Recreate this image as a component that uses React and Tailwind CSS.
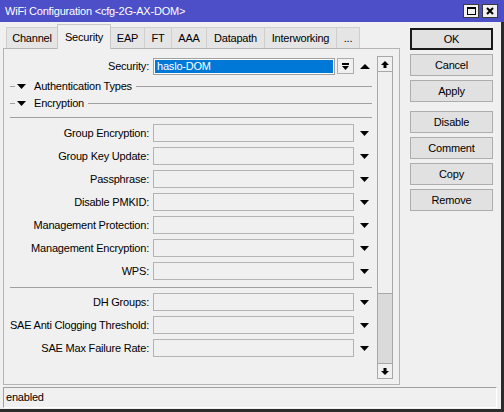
// WiFi Configuration window

const font = "font-['Liberation_Sans',Arial,sans-serif]";

function DownTri() {
  return (
    <svg width="9" height="5" viewBox="0 0 9 5">
      <polygon points="0,0 9,0 4.5,5" fill="#000" />
    </svg>
  );
}

function UpTri() {
  return (
    <svg width="10" height="5" viewBox="0 0 10 5">
      <polygon points="0,5 10,5 5,0" fill="#000" />
    </svg>
  );
}

function ScrollArrow({ up }) {
  return (
    <svg width="8" height="7" viewBox="0 0 8 7" className={up ? "" : "rotate-180"}>
      <polygon points="4,0 8,4 0,4" fill="#000" />
      <rect x="2.5" y="4" width="3" height="3" fill="#000" />
    </svg>
  );
}

function Row({ label }) {
  return (
    <div className="flex items-center h-[18px] shrink-0">
      <div className="w-[145px] shrink-0 text-right whitespace-nowrap">{label}:</div>
      <div className="ml-[4px] w-[201px] h-[18px] border border-[#b4b4b4] bg-[#f0f0f0]" />
      <div className="ml-[6px] flex items-center">
        <DownTri />
      </div>
    </div>
  );
}

function Header({ title, className }) {
  return (
    <div className={"flex items-center h-[17px] shrink-0 " + (className || "")}>
      <div className="ml-[6px] w-[5px] h-px bg-[#a0a0a0]" />
      <div className="ml-[2px] flex items-center">
        <DownTri />
      </div>
      <div className="ml-[8px] whitespace-nowrap">{title}</div>
      <div className="ml-[4px] mr-[5px] flex-1 h-px bg-[#a0a0a0]" />
    </div>
  );
}

function Tab({ label, width, active }) {
  if (active) {
    return (
      <div
        className={
          "h-[25px] -mb-px relative z-10 bg-[#f0f0f0] border-t border-l border-r border-[#c8c8c8] flex items-start justify-center pt-[4px] " +
          width
        }
      >
        {label}
      </div>
    );
  }
  return (
    <div
      className={
        "h-[21px] bg-[#e5e5e5] border-t border-r border-[#cfcfcf] flex items-center justify-center " +
        width
      }
    >
      {label}
    </div>
  );
}

function SideButton({ label, primary, className }) {
  return (
    <div
      className={
        "h-[22px] flex items-center justify-center bg-[#e1e1e1] " +
        (primary ? "border-2 border-[#1a1a1a] " : "border border-[#adadad] ") +
        (className || "")
      }
    >
      {label}
    </div>
  );
}

export default function App() {
  return (
    <div
      className={
        "w-[504px] h-[412px] bg-[#f0f0f0] flex flex-col overflow-hidden text-[11px] tracking-[-0.2px] text-black " +
        font
      }
    >
      {/* title bar */}
      <div className="h-[22px] shrink-0 bg-[#4c4fc7] flex items-center pl-[5px] pr-[6px] text-white">
        <span className="flex-1 whitespace-nowrap">WiFi Configuration &lt;cfg-2G-AX-DOM&gt;</span>
        <div className="flex gap-[3px]">
          <div className="w-[16px] h-[14px] bg-[#f0f0f0] border border-[#3a3a3a] flex items-center justify-center">
            <div className="w-[9px] h-[8px] border border-black border-t-2" />
          </div>
          <div className="w-[16px] h-[14px] bg-[#f0f0f0] border border-[#3a3a3a] flex items-center justify-center">
            <svg width="8" height="8" viewBox="0 0 8 8">
              <path d="M1 1 L7 7 M7 1 L1 7" stroke="#000" strokeWidth="2" />
            </svg>
          </div>
        </div>
      </div>

      {/* body */}
      <div className="flex-1 flex flex-col border-r-[3px] border-b-[3px] border-[#2b2b2b]">
        <div className="h-[363px] flex shrink-0">
          {/* left column: tabs + panel */}
          <div className="ml-[3px] w-[397px] flex flex-col">
            <div className="h-[26px] flex items-end pl-[3px] shrink-0">
              <div className="h-[21px] w-[51px] bg-[#e5e5e5] border-t border-l border-[#cfcfcf] flex items-center justify-center">
                Channel
              </div>
              <Tab label="Security" width="w-[54px]" active />
              <Tab label="EAP" width="w-[34px]" />
              <Tab label="FT" width="w-[27px]" />
              <Tab label="AAA" width="w-[35px]" />
              <Tab label="Datapath" width="w-[58px]" />
              <Tab label="Interworking" width="w-[72px]" />
              <Tab label="..." width="w-[23px]" />
            </div>

            <div className="flex-1 border border-[#b4b4b4] flex">
              {/* form */}
              <div className="flex-1 flex flex-col pt-[8px]">
                <div className="flex items-center h-[18px] shrink-0">
                  <div className="w-[145px] shrink-0 text-right">Security:</div>
                  <div className="ml-[4px] w-[182px] h-[17px] border border-[#a0a0a0] bg-white p-px">
                    <div className="h-full bg-[#0078d7] text-white pl-[2px] flex items-center leading-none">
                      haslo-DOM
                    </div>
                  </div>
                  <div className="ml-[2px] w-[17px] h-[16px] border border-[#adadad] bg-[#f0f0f0] flex flex-col items-center justify-center gap-px">
                    <div className="w-[7px] h-[2px] bg-black" />
                    <svg width="7" height="4" viewBox="0 0 7 4">
                      <polygon points="0,0 7,0 3.5,4" fill="#000" />
                    </svg>
                  </div>
                  <div className="ml-[6px] flex items-center">
                    <UpTri />
                  </div>
                </div>

                <Header title="Authentication Types" className="mt-[3px]" />
                <Header title="Encryption" />

                <div className="mt-[5px] ml-[6px] mr-[5px] h-px bg-[#a0a0a0] shrink-0" />

                <div className="mt-[6px] flex flex-col gap-[5px]">
                  <Row label="Group Encryption" />
                  <Row label="Group Key Update" />
                  <Row label="Passphrase" />
                  <Row label="Disable PMKID" />
                  <Row label="Management Protection" />
                  <Row label="Management Encryption" />
                  <Row label="WPS" />
                </div>

                <div className="mt-[7px] ml-[6px] mr-[5px] h-px bg-[#a0a0a0] shrink-0" />

                <div className="mt-[5px] flex flex-col gap-[5px]">
                  <Row label="DH Groups" />
                  <Row label="SAE Anti Clogging Threshold" />
                  <Row label="SAE Max Failure Rate" />
                </div>
              </div>

              {/* scrollbar */}
              <div className="w-[16px] mt-[7px] mb-[5px] mr-[6px] border border-[#a8a8a8] flex flex-col">
                <div className="h-[15px] border-b border-[#a8a8a8] flex items-center justify-center">
                  <ScrollArrow up />
                </div>
                <div className="h-[222px] border-b border-[#a8a8a8] bg-[#f0f0f0]" />
                <div className="flex-1 bg-[#dadada]" />
                <div className="h-[15px] border-t border-[#a8a8a8] flex items-center justify-center">
                  <ScrollArrow />
                </div>
              </div>
            </div>
          </div>

          {/* right column: buttons */}
          <div className="ml-[10px] w-[83px] pt-[6px] flex flex-col">
            <SideButton label="OK" primary />
            <SideButton label="Cancel" className="mt-[4px]" />
            <SideButton label="Apply" className="mt-[4px]" />
            <SideButton label="Disable" className="mt-[9px]" />
            <SideButton label="Comment" className="mt-[4px]" />
            <SideButton label="Copy" className="mt-[4px]" />
            <SideButton label="Remove" className="mt-[4px]" />
          </div>
        </div>

        {/* status bar */}
        <div className="mt-[2px] ml-[3px] w-[494px] h-[21px] border-t border-l border-[#a0a0a0] border-r border-b border-r-white border-b-white flex items-center pl-[2px]">
          enabled
        </div>
      </div>
    </div>
  );
}
